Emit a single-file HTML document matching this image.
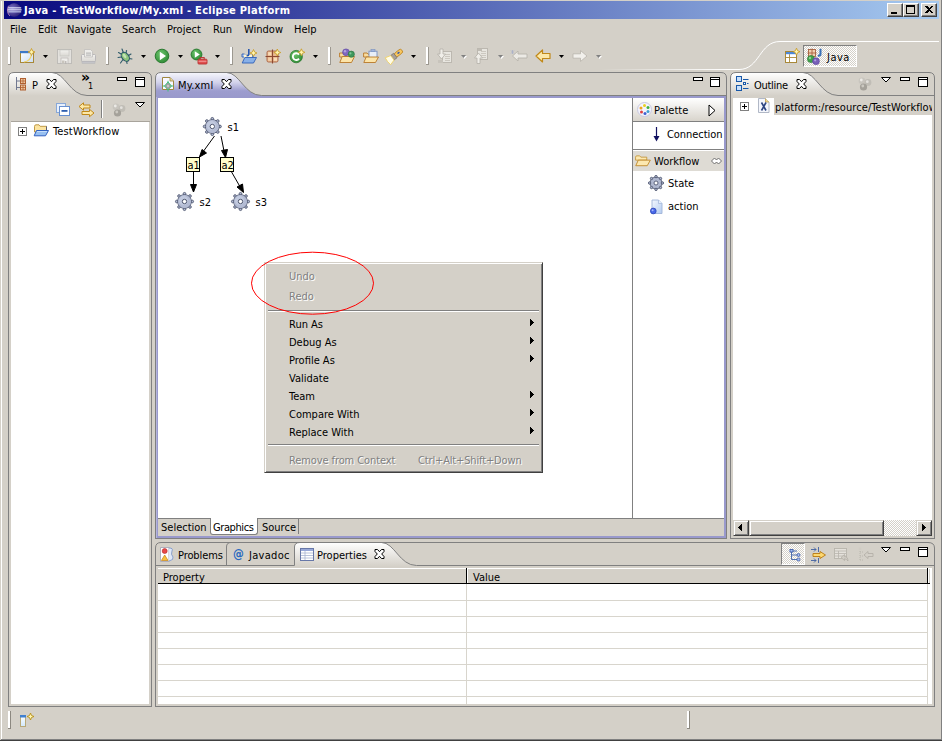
<!DOCTYPE html>
<html>
<head>
<meta charset="utf-8">
<title>Java - TestWorkflow/My.xml - Eclipse Platform</title>
<style>
html,body{margin:0;padding:0;}
body{width:942px;height:741px;overflow:hidden;background:#D4D0C8;position:relative;
 font-family:"DejaVu Sans Condensed","Liberation Sans",sans-serif;font-size:11px;color:#000;line-height:13px;}
.a{position:absolute;}
.t{position:absolute;white-space:nowrap;line-height:13px;height:13px;}
svg{position:absolute;overflow:visible;}
/* window frame */
#frame-l1{left:0;top:0;width:1px;height:741px;background:#D4D0C8;}
#frame-l2{left:1px;top:1px;width:1px;height:739px;background:#fff;}
#frame-r1{left:941px;top:0;width:1px;height:741px;background:#808080;}
#frame-r2{left:940px;top:1px;width:1px;height:739px;background:#D4D0C8;}
#frame-b1{left:0;top:740px;width:942px;height:1px;background:#404040;}
#frame-b2{left:1px;top:739px;width:940px;height:1px;background:#808080;}
#title{left:4px;top:1px;width:935px;height:18px;background:linear-gradient(to right,#08087E 0%,#A6CAF0 100%);}
#title .t{left:20px;top:3px;color:#fff;font-weight:bold;letter-spacing:0.27px;}
.wb{position:absolute;top:3px;width:16px;height:14px;background:#D4D0C8;box-sizing:border-box;
 border:1px solid;border-color:#fff #404040 #404040 #fff;box-shadow:inset -1px -1px 0 #808080;}
.menu .t{top:23px;}
.hdl{position:absolute;top:47px;width:3px;height:18px;box-sizing:border-box;background:#fff;border-right:1px solid #9C9890;border-bottom:1px solid #9C9890;}
.dd{position:absolute;top:55px;width:0;height:0;border-left:3px solid transparent;border-right:3px solid transparent;border-top:3px solid #000;}
.dd.g{border-top-color:#808080;}
.panel{position:absolute;box-sizing:border-box;border:1px solid #808080;border-radius:6px 6px 0 0;background:#D4D0C8;}
.white{position:absolute;background:#fff;}
.sbtn{background:#D4D0C8;box-sizing:border-box;border:1px solid;border-color:#D4D0C8 #404040 #404040 #D4D0C8;box-shadow:inset 1px 1px 0 #fff, inset -1px -1px 0 #808080;}
.hl{position:absolute;height:1px;}
.vl{position:absolute;width:1px;}
.plus{position:absolute;width:9px;height:9px;box-sizing:border-box;border:1px solid #808080;background:#fff;}
.plus:before{content:"";position:absolute;left:1px;top:3px;width:5px;height:1px;background:#000;}
.plus:after{content:"";position:absolute;left:3px;top:1px;width:1px;height:5px;background:#000;}
.mi{position:absolute;left:24px;white-space:nowrap;line-height:13px;}
.mi.dis{color:#808080;text-shadow:1px 1px 0 #fff;}
.sub{position:absolute;left:266px;width:0;height:0;border-top:3.5px solid transparent;border-bottom:3.5px solid transparent;border-left:4px solid #000;}
</style>
</head>
<body>
<!-- window frame -->
<div class="a" id="frame-l2"></div><div class="a" id="frame-r1"></div><div class="a" id="frame-r2"></div>
<div class="a" id="frame-b1"></div><div class="a" id="frame-b2"></div>
<div class="a" id="frame-t" style="left:1px;top:0;width:939px;height:1px;background:#D4D0C8"></div>

<!-- title bar -->
<div class="a" id="title">
  <div class="t">Java - TestWorkflow/My.xml - Eclipse Platform</div>
</div>
<div class="wb" style="left:887px"><div class="a" style="left:3px;top:8px;width:6px;height:2px;background:#000"></div></div>
<div class="wb" style="left:903px"><div class="a" style="left:2px;top:1px;width:9px;height:9px;box-sizing:border-box;border:1px solid #000;border-top-width:2px"></div></div>
<div class="wb" style="left:921px"><svg style="left:3px;top:2px" width="8" height="7" viewBox="0 0 8 7" shape-rendering="crispEdges"><path d="M0 0 H2 L4 2 L6 0 H8 L5 3.500 L8 7 H6 L4 5 L2 7 H0 L3 3.500 Z" fill="#000"/></svg></div>
<!-- eclipse icon -->
<svg style="left:7px;top:3px" width="15" height="14" viewBox="0 0 15 14">
 <defs><radialGradient id="gEcl" cx="0.35" cy="0.4" r="0.75"><stop offset="0" stop-color="#8078C8"/><stop offset="0.7" stop-color="#3C3088"/><stop offset="1" stop-color="#2C2468"/></radialGradient></defs>
 <ellipse cx="7.200" cy="7" rx="7" ry="6.800" fill="url(#gEcl)"/>
 <path d="M1.500 2.800 Q0.3 5 0.5 8.500 Q1 11.500 3 13" fill="none" stroke="#E0A0C0" stroke-width="0.9" opacity="0.8"/>
 <rect x="1.200" y="4.300" width="13" height="1.100" fill="#E8ECFC"/>
 <rect x="0.800" y="6.300" width="13.800" height="1.100" fill="#E8ECFC"/>
 <rect x="1.200" y="8.300" width="13" height="1.100" fill="#C8D0F0"/>
</svg>
<!-- menu bar -->
<div class="menu">
  <div class="t" style="left:10px">File</div>
  <div class="t" style="left:38px">Edit</div>
  <div class="t" style="left:67px">Navigate</div>
  <div class="t" style="left:122px">Search</div>
  <div class="t" style="left:167px">Project</div>
  <div class="t" style="left:213px">Run</div>
  <div class="t" style="left:244px">Window</div>
  <div class="t" style="left:294px">Help</div>
</div>

<!-- TOOLBAR-START -->
<!-- toolbar separator lines -->
<div class="hl" style="left:2px;top:41px;width:0px;background:#fff"></div>
<div class="hdl" style="left:8px"></div>
<div class="hdl" style="left:106px"></div>
<div class="hdl" style="left:230px"></div>
<div class="hdl" style="left:328px"></div>
<div class="hdl" style="left:426px"></div>
<!-- dropdown arrows -->
<svg style="left:43px;top:55px" width="5" height="3"><polygon points="0,0 5,0 2.5,3" fill="#000"/></svg>
<svg style="left:141px;top:55px" width="5" height="3"><polygon points="0,0 5,0 2.5,3" fill="#000"/></svg>
<svg style="left:178px;top:55px" width="5" height="3"><polygon points="0,0 5,0 2.5,3" fill="#000"/></svg>
<svg style="left:215px;top:55px" width="5" height="3"><polygon points="0,0 5,0 2.5,3" fill="#000"/></svg>
<svg style="left:313px;top:55px" width="5" height="3"><polygon points="0,0 5,0 2.5,3" fill="#000"/></svg>
<svg style="left:411px;top:55px" width="5" height="3"><polygon points="0,0 5,0 2.5,3" fill="#000"/></svg>
<svg style="left:461px;top:55px" width="6" height="4"><polygon points="1,1 6,1 3.5,4" fill="#fff"/><polygon points="0,0 5,0 2.5,3" fill="#808080"/></svg>
<svg style="left:498px;top:55px" width="6" height="4"><polygon points="1,1 6,1 3.5,4" fill="#fff"/><polygon points="0,0 5,0 2.5,3" fill="#808080"/></svg>
<svg style="left:559px;top:55px" width="5" height="3"><polygon points="0,0 5,0 2.5,3" fill="#000"/></svg>
<svg style="left:596px;top:55px" width="6" height="4"><polygon points="1,1 6,1 3.5,4" fill="#fff"/><polygon points="0,0 5,0 2.5,3" fill="#808080"/></svg>

<!-- new wizard -->
<svg style="left:20px;top:48px" width="16" height="16" viewBox="0 0 16 16">
 <defs><linearGradient id="gNew" x1="0" y1="0" x2="1" y2="1"><stop offset="0" stop-color="#fff"/><stop offset="1" stop-color="#C8DCF4"/></linearGradient></defs>
 <rect x="0.5" y="3.5" width="13" height="11" fill="url(#gNew)" stroke="#A88838"/>
 <rect x="0" y="3" width="11" height="2.2" fill="#3C78C8"/>
 <path d="M4 14 Q11 13 11.5 6" fill="none" stroke="#F0D060" stroke-width="1.2"/>
 <path d="M11.5 0.5 L12.6 3 L15 4 L12.6 5 L11.5 7.5 L10.4 5 L8 4 L10.4 3 Z" fill="#FFF6B0" stroke="#C89820" stroke-width="0.8"/>
</svg>
<!-- save (disabled) -->
<svg style="left:57px;top:49px" width="15" height="15" viewBox="0 0 15 15">
 <defs><linearGradient id="gDis" x1="0" y1="0" x2="0" y2="1"><stop offset="0" stop-color="#F2F1EE"/><stop offset="1" stop-color="#DAD8D3"/></linearGradient></defs>
 <rect x="0.5" y="0.5" width="14" height="14" fill="#E3E1DD" stroke="#BEBCB8"/>
 <rect x="3" y="1" width="9" height="6" fill="url(#gDis)" stroke="#C4C2BE" stroke-width="0.6"/>
 <rect x="4" y="9" width="7" height="5.500" fill="#F0EFEC" stroke="#B8B6B2" stroke-width="0.7"/>
 <rect x="5" y="11.500" width="2.500" height="3" fill="#C8C4BC"/><rect x="8.300" y="12" width="1" height="2.500" fill="#A8A4A0"/>
</svg>
<!-- print (disabled) -->
<svg style="left:81px;top:49px" width="15" height="15" viewBox="0 0 15 15">
 <rect x="0.5" y="5.500" width="14" height="7" rx="1" fill="url(#gDis)" stroke="#B8B6B8"/>
 <path d="M3.500 0.5 H9.500 L11.500 2.500 V8 H3.500 Z" fill="#EEEDEA" stroke="#C0BEBC" stroke-width="0.8"/>
 <rect x="1" y="12.500" width="13" height="1.800" fill="#C4C4C8" stroke="#B4B4B8" stroke-width="0.5"/>
 <rect x="5" y="3.600" width="5" height="1" fill="#B0B0B0"/><rect x="5" y="5.600" width="5" height="1" fill="#B0B0B0"/>
</svg>
<!-- debug bug -->
<svg style="left:117px;top:48px" width="17" height="17" viewBox="0 0 17 17">
 <g stroke="#2C5868" stroke-width="1.1" fill="none" stroke-linecap="round">
  <path d="M5 1 L6.5 5"/><path d="M1.5 4.5 L5 6.5"/><path d="M1 9.5 L4.5 9"/><path d="M3.5 15 L6 11.5"/>
  <path d="M9.5 2.5 L9 5.5"/><path d="M14 6 L11.5 7.5"/><path d="M15 11 L12 10.5"/><path d="M10 15.5 L9.5 12.5"/>
 </g>
 <ellipse cx="8.3" cy="8.8" rx="3.4" ry="5" transform="rotate(-38 8.3 8.8)" fill="#8CC47C" stroke="#2C5868" stroke-width="1.1"/>
 <ellipse cx="7.6" cy="8" rx="1.3" ry="2.4" transform="rotate(-38 7.6 8)" fill="#C4E4B4"/>
</svg>
<!-- run -->
<svg style="left:154px;top:48px" width="16" height="16" viewBox="0 0 16 16">
 <defs><radialGradient id="gRun" cx="0.4" cy="0.35" r="0.7"><stop offset="0" stop-color="#6CC46C"/><stop offset="1" stop-color="#2E8A34"/></radialGradient></defs>
 <circle cx="8" cy="8" r="6.8" fill="url(#gRun)" stroke="#2A7A30" stroke-width="1"/>
 <path d="M5.8 3.8 L12 8 L5.8 12.2 Z" fill="#fff"/>
</svg>
<!-- run external tools -->
<svg style="left:190px;top:48px" width="18" height="17" viewBox="0 0 18 17">
 <circle cx="6.5" cy="6.5" r="5.4" fill="url(#gRun)" stroke="#2A7A30" stroke-width="1"/>
 <path d="M4.8 3.3 L9.8 6.5 L4.8 9.7 Z" fill="#fff"/>
 <rect x="10.2" y="9.6" width="4" height="2.4" fill="none" stroke="#B83030" stroke-width="1"/>
 <rect x="8" y="11.2" width="9" height="4.8" rx="0.8" fill="#E05050" stroke="#B83030" stroke-width="0.9"/>
 <rect x="8.5" y="12.8" width="8" height="0.9" fill="#F4A0A0"/>
</svg>
<!-- new java project -->
<svg style="left:241px;top:48px" width="17" height="16" viewBox="0 0 17 16">
 <path d="M1 6 H3.5 L4.5 7 H12 V9 H1 Z" fill="#B8D0F0" stroke="#3060B8" stroke-width="0.9"/>
 <path d="M3 6.5 H11 V11 H3 Z" fill="#FFF4D0"/>
 <path d="M1.2 15 L3.8 9.5 H15.5 L12.5 15 Z" fill="#88B0E8" stroke="#3060B8" stroke-width="0.9"/>
 <path d="M7.8 1 V6.2 Q7.8 7.6 6.2 7.6 H5.6" fill="none" stroke="#2858B0" stroke-width="1.6"/>
 <path d="M12.5 1.5 L13.6 4 L16 5 L13.6 6 L12.5 8.5 L11.4 6 L9 5 L11.4 4 Z" fill="#FFF6B0" stroke="#C89820" stroke-width="0.8"/>
</svg>
<!-- new package -->
<svg style="left:265px;top:48px" width="17" height="16" viewBox="0 0 17 16">
 <rect x="2" y="3" width="11" height="11" rx="1.5" fill="#E8B890" stroke="#A86040" stroke-width="0.9"/>
 <path d="M7.5 1.5 V15.5 M0.5 8.5 H14.5" stroke="#8C4830" stroke-width="1.1"/>
 <rect x="3.2" y="4.2" width="3" height="3" fill="#F8DCB8"/><rect x="9" y="9.8" width="3" height="3" fill="#F8DCB8"/><rect x="3.2" y="9.8" width="3" height="3" fill="#F4D0A8"/>
 <path d="M12.3 1 L13.4 3.5 L15.8 4.5 L13.4 5.5 L12.3 8 L11.2 5.5 L8.8 4.5 L11.2 3.5 Z" fill="#FFF6B0" stroke="#C89820" stroke-width="0.8"/>
</svg>
<!-- new class -->
<svg style="left:289px;top:48px" width="17" height="16" viewBox="0 0 17 16">
 <circle cx="7.2" cy="8.6" r="6.2" fill="url(#gRun)" stroke="#2A7A30" stroke-width="0.8"/>
 <path d="M10 6.6 A3.4 3.4 0 1 0 10 10.6" fill="none" stroke="#fff" stroke-width="1.9"/>
 <path d="M12.4 0.8 L13.5 3.3 L15.9 4.3 L13.5 5.3 L12.4 7.8 L11.3 5.3 L8.9 4.3 L11.3 3.3 Z" fill="#FFF6B0" stroke="#C89820" stroke-width="0.8"/>
</svg>
<!-- open type -->
<svg style="left:339px;top:48px" width="17" height="16" viewBox="0 0 17 16">
 <path d="M0.6 5 H4 L5 6.2 H12.5 V9 H0.6 Z" fill="#F8DCA0" stroke="#B87828" stroke-width="0.9"/>
 <path d="M0.8 14.5 L3.2 8.5 H15.5 L12.5 14.5 Z" fill="#FCE4A8" stroke="#B87828" stroke-width="0.9"/>
 <circle cx="7" cy="4.3" r="3.4" fill="#8068C0" stroke="#5840A0" stroke-width="0.6"/>
 <circle cx="6" cy="3.3" r="1.2" fill="#B0A0E0"/>
 <circle cx="12.3" cy="6.2" r="3.1" fill="#40985C" stroke="#287040" stroke-width="0.6"/>
 <circle cx="11.4" cy="5.3" r="1.1" fill="#80C898"/>
</svg>
<!-- open task -->
<svg style="left:363px;top:48px" width="17" height="16" viewBox="0 0 17 16">
 <path d="M0.6 5 H4 L5 6.2 H12.5 V9 H0.6 Z" fill="#F8DCA0" stroke="#B87828" stroke-width="0.9"/>
 <rect x="6" y="3.2" width="8" height="6.5" fill="#E8EEF8" stroke="#7890C0" stroke-width="0.9"/>
 <rect x="8" y="1.6" width="4" height="2" fill="#A0B4DC" stroke="#7890C0" stroke-width="0.6"/>
 <path d="M0.8 14.5 L3.2 9 H15.5 L12.5 14.5 Z" fill="#FCE4A8" stroke="#B87828" stroke-width="0.9"/>
</svg>
<!-- search flashlight -->
<svg style="left:387px;top:48px" width="17" height="16" viewBox="0 0 17 16">
 <g transform="rotate(-38 8 8)">
  <rect x="8.200" y="5.600" width="8.800" height="4.400" rx="2" fill="#F8C860" stroke="#C08828" stroke-width="0.9"/>
  <rect x="11.500" y="6.900" width="2.400" height="1.500" fill="#3858A8"/>
  <path d="M4.800 5 H8.600 V10.600 H4.800 Z" fill="#A8A098" stroke="#787068" stroke-width="0.7"/>
  <path d="M-0.800 3.400 L4.800 5 V10.600 L-0.800 12.200 Q-1.800 7.800 -0.800 3.400 Z" fill="#FFFCE8" stroke="#F0D060" stroke-width="0.8"/>
 </g>
</svg>
<!-- disabled: next annotation -->
<svg style="left:437px;top:48px" width="16" height="16" viewBox="0 0 16 16">
 <rect x="5.5" y="3.5" width="9" height="11" fill="#E8E6E0" stroke="#BCB8B0"/>
 <path d="M8 6.5 H13 M8 8.5 H13 M8 10.5 H13 M8 12.5 H13" stroke="#C4C0B8" stroke-width="0.8"/>
 <path d="M3 1 H6 V6 H8.5 L4.5 11 L0.5 6 H3 Z" fill="#F0EEE9" stroke="#B4B0A8" stroke-width="0.8"/>
 <rect x="1" y="12" width="5" height="3" fill="#C8C4BC"/>
</svg>
<!-- disabled: prev annotation -->
<svg style="left:474px;top:48px" width="16" height="16" viewBox="0 0 16 16">
 <rect x="3.5" y="0.5" width="10" height="11" fill="#E8E6E0" stroke="#BCB8B0"/>
 <path d="M7 3.5 H12 M7 5.5 H12 M7 7.5 H12 M7 9.5 H12" stroke="#C4C0B8" stroke-width="0.8"/>
 <rect x="4" y="1" width="4" height="2" fill="#C0BCB4"/>
 <path d="M3 15.5 H6 V10 H8.5 L4.5 5 L0.5 10 H3 Z" fill="#F0EEE9" stroke="#B4B0A8" stroke-width="0.8"/>
</svg>
<!-- disabled: last edit location -->
<svg style="left:510px;top:49px" width="18" height="14" viewBox="0 0 18 14">
 <path d="M2.5 7 L8 2 V5 H17 V9 H8 V12 Z" fill="#ECEAE5" stroke="#B8B4AC" stroke-width="0.9"/>
 <path d="M1 1.5 L4 4.5 M4 1.5 L1 4.5 M2.5 1 V5" stroke="#A8B0C8" stroke-width="0.8"/>
</svg>
<!-- back -->
<svg style="left:535px;top:49px" width="16" height="14" viewBox="0 0 16 14">
 <path d="M1 7 L7.5 1 V4.5 H15 V9.5 H7.5 V13 Z" fill="#FCE8A8" stroke="#C08818" stroke-width="1.2" stroke-linejoin="round"/>
</svg>
<!-- forward disabled -->
<svg style="left:572px;top:49px" width="16" height="14" viewBox="0 0 16 14">
 <path d="M15 7 L8.5 1.5 V4.8 H1 V9.2 H8.5 V12.5 Z" fill="#F2F0EC" stroke="#BCB8B0" stroke-width="0.9" stroke-linejoin="round"/>
</svg>
<!-- TOOLBAR-END -->

<!-- PANELS-START -->
<!-- perspective switcher curve + toolbar bottom highlight -->
<svg style="left:0;top:0" width="942" height="100">
 <defs><linearGradient id="gFade" gradientUnits="userSpaceOnUse" x1="600" y1="0" x2="730" y2="0"><stop offset="0" stop-color="#fff" stop-opacity="0"/><stop offset="1" stop-color="#fff" stop-opacity="1"/></linearGradient></defs>
 <path d="M600 69.5 H739 C760 69.5 759 41.5 780 41.5 H939" fill="none" stroke="url(#gFade)" stroke-width="1"/>
</svg>
<!-- open perspective -->
<svg style="left:785px;top:48px" width="16" height="16" viewBox="0 0 16 16">
 <rect x="0.5" y="3.5" width="11" height="11" fill="#fff" stroke="#A88838"/>
 <rect x="1" y="4" width="10" height="2.2" fill="#4C88D8"/>
 <path d="M1 9.5 H11 M4.5 6.2 V14" stroke="#A88838" stroke-width="0.9"/>
 <path d="M11.5 0.2 L12.6 2.7 L15 3.7 L12.6 4.7 L11.5 7.2 L10.4 4.7 L8 3.7 L10.4 2.7 Z" fill="#FFF6B0" stroke="#C89820" stroke-width="0.8"/>
</svg>
<!-- Java perspective button (pressed) -->
<div class="a" style="left:803px;top:45px;width:54px;height:22px;box-sizing:border-box;background:repeating-conic-gradient(#fff 0% 25%,#D4D0C8 0% 50%) 0 0/2px 2px;border:1px solid;border-color:#808080 #fff #fff #808080;"></div>
<svg style="left:807px;top:48px" width="17" height="17" viewBox="0 0 17 17">
 <rect x="1.5" y="1.5" width="7" height="7" fill="#F0D0B0" stroke="#A86040" stroke-width="0.9"/>
 <path d="M5 0.5 V9.5 M0.5 5 H9.5" stroke="#A86040" stroke-width="0.9"/>
 <path d="M13.5 0.8 V6 Q13.5 7.8 11.6 7.8 H10.800" fill="none" stroke="#3870B8" stroke-width="2"/>
 <circle cx="4" cy="11" r="3.6" fill="#40A048" stroke="#287838" stroke-width="0.6"/><circle cx="3" cy="10" r="1.2" fill="#90D098"/>
 <circle cx="9" cy="13.2" r="3.4" fill="#7860B8" stroke="#5840A0" stroke-width="0.6"/><circle cx="8.2" cy="12.3" r="1.1" fill="#B0A0E0"/>
</svg>
<div class="t" style="left:827px;top:51px;letter-spacing:0.5px">Java</div>

<!-- ===== LEFT PANEL (Package Explorer) ===== -->
<svg style="left:8px;top:72px" width="144" height="30">
 <defs><linearGradient id="gTabW" x1="0" y1="0" x2="0" y2="1"><stop offset="0" stop-color="#fff"/><stop offset="1" stop-color="#D4D0C8"/></linearGradient></defs>
 <path d="M0.5 24 V6 Q0.5 0.5 6 0.5 H44 C57 0.5 62 23.5 79 23.5 H0.5 Z" fill="url(#gTabW)"/>
 <path d="M0.5 30 V6 Q0.5 0.5 6 0.5 H138 Q143.500 0.5 143.500 6 V30" fill="none" stroke="#808080"/>
 <path d="M44 0.5 C57 0.5 62 23.5 79 23.5 H143.500" fill="none" stroke="#808080"/>
</svg>
<div class="a" style="left:8px;top:100px;width:1px;height:607px;background:#808080"></div>
<div class="a" style="left:151px;top:100px;width:1px;height:607px;background:#808080"></div>
<div class="a" style="left:8px;top:706px;width:144px;height:1px;background:#808080"></div>
<div class="a" style="left:11px;top:121px;width:139px;height:1px;background:#A8A49C"></div>
<div class="white" style="left:11px;top:122px;width:138px;height:582px"></div>
<!-- tab icon: package explorer -->
<svg style="left:16px;top:77px" width="10" height="14" viewBox="0 0 10 14">
 <path d="M0.5 0 V13 M0.5 4 H4 M0.5 10.500 H4" stroke="#707890" stroke-width="1" fill="none"/>
 <rect x="4.500" y="1.5" width="5" height="5" fill="#F0C8A0" stroke="#B06030"/><path d="M7 1.5 V6.5 M4.500 4 H9.500" stroke="#B06030" stroke-width="0.8"/>
 <rect x="4.500" y="8" width="5" height="5" fill="#F0C8A0" stroke="#B06030"/><path d="M7 8 V13 M4.500 10.500 H9.500" stroke="#B06030" stroke-width="0.8"/>
</svg>
<div class="t" style="left:32px;top:79px">P</div>
<svg class="cx" style="left:46px;top:79px" width="11" height="10" viewBox="0 0 11 10"><path d="M1 0.5 H3.500 L5.500 2.700 L7.500 0.5 H10 V2.500 L7.700 5 L10 7.500 V9.500 H7.500 L5.500 7.300 L3.500 9.500 H1 V7.500 L3.300 5 L1 2.500 Z" fill="#fff" stroke="#000" stroke-width="1"/></svg>
<div class="t" style="left:81px;top:71px;font-size:14px;font-weight:bold;font-family:'DejaVu Sans','Liberation Sans',sans-serif">»</div>
<div class="t" style="left:88px;top:80px;font-size:9px">1</div>
<!-- min / max -->
<svg style="left:117px;top:77px" width="11" height="4"><rect x="0.5" y="0.5" width="9" height="3" fill="#fff" stroke="#000"/></svg>
<svg style="left:135px;top:77px" width="11" height="10"><rect x="0.5" y="0.5" width="9" height="9" fill="#fff" stroke="#000"/><rect x="0" y="2" width="10" height="1" fill="#000"/></svg>
<!-- view toolbar -->
<svg style="left:56px;top:103px" width="14" height="13" viewBox="0 0 14 13">
 <rect x="0.5" y="0.5" width="9" height="9" fill="#E8F0FC" stroke="#88A8D8"/>
 <rect x="3.500" y="3.500" width="10" height="9" fill="#fff" stroke="#6890D0"/>
 <rect x="5.500" y="7" width="6" height="1.800" fill="#3060B0"/>
</svg>
<svg style="left:78px;top:102px" width="17" height="16" viewBox="0 0 17 16">
 <path d="M1 4.500 L5.500 0.800 V3 H12 V6 H5.500 V8.200 Z" fill="#FCE8A8" stroke="#C08818" stroke-width="1" stroke-linejoin="round"/>
 <path d="M16 11 L11.500 7.300 V9.500 H4 V12.500 H11.500 V14.700 Z" fill="#FCE8A8" stroke="#C08818" stroke-width="1" stroke-linejoin="round"/>
</svg>
<div class="a" style="left:101px;top:100px;width:1px;height:18px;background:#808080"></div>
<div class="a" style="left:102px;top:100px;width:1px;height:18px;background:#fff"></div>
<svg style="left:112px;top:103px" width="14" height="14" viewBox="0 0 14 14">
 <circle cx="4" cy="3.800" r="3.400" fill="#C8C5BE"/><circle cx="10" cy="5.500" r="3.400" fill="#C0BDB6"/><circle cx="5.500" cy="10" r="3.600" fill="#A4A19A"/>
 <circle cx="3.300" cy="3" r="1.400" fill="#ECEAE6"/><circle cx="9.300" cy="4.700" r="1.400" fill="#E4E2DE"/><circle cx="4.800" cy="9" r="1.400" fill="#CCC9C2"/>
</svg>
<svg style="left:135px;top:102px" width="11" height="6"><path d="M0.5 0.5 H9.500 L5 5 Z" fill="#fff" stroke="#000" stroke-width="1"/></svg>
<!-- tree -->
<div class="plus" style="left:18px;top:127px"></div>
<svg style="left:33px;top:124px" width="16" height="13" viewBox="0 0 16 13">
 <path d="M1.500 2.500 Q1.500 0.800 3 0.800 H6 L7.200 2.300 H13.500 V8 H1.500 Z" fill="#FCE4A0" stroke="#B89038" stroke-width="0.9"/>
 <path d="M13.500 2.500 V7" stroke="#505878" stroke-width="0.9"/>
 <path d="M1.200 11.800 L3.500 6.500 H15.500 L12.500 11.800 Z" fill="#98C0F0" stroke="#3060C0" stroke-width="1"/>
 <path d="M4 7.500 H14" stroke="#D0E4FC" stroke-width="0.8"/>
</svg>
<div class="t" style="left:53px;top:125px;letter-spacing:0.15px">TestWorkflow</div>

<!-- ===== EDITOR ===== -->
<svg style="left:155px;top:72px" width="572" height="30">
 <defs><linearGradient id="gTabP" x1="0" y1="0" x2="0" y2="1"><stop offset="0" stop-color="#F6F6FC"/><stop offset="0.38" stop-color="#D4D4EC"/><stop offset="0.72" stop-color="#9C9CCE"/><stop offset="1" stop-color="#9999CC"/></linearGradient></defs>
 <path d="M0.5 26 V6 Q0.5 0.5 6 0.5 H71.500 C84.500 0.5 89.500 23.5 106.500 23.5 H571 V26 Z" fill="url(#gTabP)"/>
 <rect x="1" y="23.500" width="570" height="2.500" fill="#9999CC"/>
 <path d="M0.5 30 V6 Q0.5 0.5 6 0.5 H566 Q571.500 0.5 571.500 6 V30" fill="none" stroke="#808080"/>
 <path d="M71.500 0.5 C84.500 0.5 89.500 23.5 106.500 23.5 H571" fill="none" stroke="#808080"/>
</svg>
<div class="a" style="left:155px;top:100px;width:1px;height:439px;background:#808080"></div>
<div class="a" style="left:726px;top:100px;width:1px;height:439px;background:#808080"></div>
<div class="a" style="left:155px;top:538px;width:572px;height:1px;background:#808080"></div>
<div class="a" style="left:156px;top:96px;width:570px;height:442px;background:#9999CC"></div>
<div class="a" style="left:156px;top:97px;width:1px;height:441px;background:#B4B4DC"></div>
<div class="white" style="left:158px;top:98px;width:474px;height:420px"></div>
<!-- editor tab content -->
<svg style="left:162px;top:77px" width="12" height="15" viewBox="0 0 12 15">
 <path d="M0.5 0.5 H8 L11.500 4 V12.500 H0.5 Z" fill="#F8F8FF" stroke="#A08840" stroke-width="1"/>
 <path d="M8 0.5 V4 H11.500" fill="#E8D8A0" stroke="#A08840" stroke-width="0.8"/>
 <path d="M6 5 L9.500 9 L6 13 L2.500 9 Z" fill="#A0A0A0" stroke="#38C078" stroke-width="0.9"/>
 <circle cx="6" cy="9" r="1.200" fill="#C8C8C8"/>
 <path d="M6 3.800 V5.500 M6 12.500 V14.500 M0.800 9 H2.800 M9.200 9 H11.200" stroke="#38C078" stroke-width="1"/>
</svg>
<div class="t" style="left:178px;top:79px;letter-spacing:0.2px">My.xml</div>
<svg style="left:221px;top:79px" width="11" height="10" viewBox="0 0 11 10"><path d="M1 0.5 H3.500 L5.500 2.700 L7.500 0.5 H10 V2.500 L7.700 5 L10 7.500 V9.500 H7.500 L5.500 7.300 L3.500 9.500 H1 V7.500 L3.300 5 L1 2.500 Z" fill="#fff" stroke="#000" stroke-width="1"/></svg>
<svg style="left:693px;top:77px" width="11" height="4"><rect x="0.5" y="0.5" width="9" height="3" fill="#fff" stroke="#000"/></svg>
<svg style="left:710px;top:77px" width="11" height="10"><rect x="0.5" y="0.5" width="9" height="9" fill="#fff" stroke="#000"/><rect x="0" y="2" width="10" height="1" fill="#000"/></svg>

<!-- editor bottom tabs -->
<div class="a" style="left:158px;top:518px;width:566px;height:18px;background:#D4D0C8"></div>
<div class="a" style="left:158px;top:518px;width:566px;height:1px;background:#808080"></div>
<div class="a" style="left:210px;top:518px;width:48px;height:17px;background:#fff;border-radius:0 0 3px 3px;border:1px solid #808080;border-top:none;box-sizing:border-box"></div>
<div class="a" style="left:298px;top:519px;width:1px;height:15px;background:#808080"></div>
<div class="t" style="left:161px;top:521px">Selection</div>
<div class="t" style="left:213px;top:521px;letter-spacing:-0.4px">Graphics</div>
<div class="t" style="left:262px;top:521px">Source</div>

<!-- palette -->
<div class="a" style="left:632px;top:98px;width:1px;height:420px;background:#808080"></div>
<div class="a" style="left:633px;top:98px;width:91px;height:420px;background:#fff"></div>
<div class="a" style="left:633px;top:98px;width:91px;height:23px;background:linear-gradient(to bottom,#fff,#D8D4CC)"></div>
<div class="a" style="left:633px;top:121px;width:91px;height:1px;background:#808080"></div>
<svg style="left:637px;top:102px" width="15" height="15" viewBox="0 0 15 15">
 <circle cx="7.500" cy="7.500" r="7" fill="#F4F4FC" stroke="#C8C8E0" stroke-width="1"/>
 <circle cx="4" cy="6" r="1.500" fill="#F0A020"/><circle cx="7.500" cy="3.500" r="1.500" fill="#E8D020"/><circle cx="11" cy="5.500" r="1.500" fill="#40B040"/>
 <circle cx="4.500" cy="10" r="1.500" fill="#E04040"/><circle cx="8" cy="11.500" r="1.500" fill="#4060D0"/><circle cx="11" cy="9.500" r="1.500" fill="#40A0D0"/>
</svg>
<div class="t" style="left:654px;top:104px">Palette</div>
<svg style="left:708px;top:104px" width="8" height="13"><path d="M1 1 V12 L7 6.500 Z" fill="#fff" stroke="#000" stroke-width="1"/></svg>
<svg style="left:652px;top:127px" width="9" height="15"><path d="M4.500 0 V10" stroke="#101060" stroke-width="1.200"/><path d="M1.500 9 H7.500 L4.500 14.500 Z" fill="#101060"/></svg>
<div class="t" style="left:667px;top:128px;letter-spacing:-0.05px">Connection</div>
<div class="a" style="left:633px;top:149px;width:91px;height:1px;background:#808080"></div>
<div class="a" style="left:633px;top:150px;width:91px;height:1px;background:#fff"></div>
<div class="a" style="left:633px;top:151px;width:91px;height:20px;background:#DEDBD4"></div>
<svg style="left:635px;top:155px" width="16" height="12" viewBox="0 0 17 14" preserveAspectRatio="none">
 <path d="M0.6 2.500 Q0.6 1 2 1 H5 L6.200 2.500 H12.500 V6 H0.6 Z" fill="#FCE8B0" stroke="#C09030" stroke-width="0.9"/>
 <path d="M0.8 12.500 L3.500 6 H16.300 L13 12.500 Z" fill="#FCE8B0" stroke="#C08828" stroke-width="1"/>
</svg>
<div class="t" style="left:654px;top:155px">Workflow</div>
<svg style="left:711px;top:157px" width="11" height="8" viewBox="0 0 11 8"><path d="M0.5 4 L3.500 1 L5.500 3 L7.500 1 L10.500 4 L7.500 7 L5.500 5 L3.500 7 Z" fill="#fff" stroke="#606060" stroke-width="0.9"/></svg>
<svg style="left:648px;top:175px" width="16" height="16" viewBox="0 0 16 16">
 <g fill="#B0B8D0" stroke="#505870" stroke-width="0.9">
  <circle cx="8" cy="8" r="6"/>
  <circle cx="8" cy="1.600" r="1.200"/><circle cx="8" cy="14.400" r="1.200"/><circle cx="1.600" cy="8" r="1.200"/><circle cx="14.400" cy="8" r="1.200"/>
  <circle cx="3.500" cy="3.500" r="1.200"/><circle cx="12.500" cy="3.500" r="1.200"/><circle cx="3.500" cy="12.500" r="1.200"/><circle cx="12.500" cy="12.500" r="1.200"/>
 </g>
 <circle cx="8" cy="8" r="2" fill="#fff" stroke="#505870" stroke-width="0.9"/>
</svg>
<div class="t" style="left:668px;top:177px">State</div>
<svg style="left:649px;top:199px" width="14" height="16" viewBox="0 0 14 16">
 <defs><linearGradient id="gAct" x1="0" y1="0" x2="1" y2="1"><stop offset="0" stop-color="#F4F8FF"/><stop offset="1" stop-color="#B4CCF0"/></linearGradient></defs>
 <path d="M3 1 H9.500 L13 4.500 V14.500 H3 Z" fill="url(#gAct)" stroke="#A0B4D8" stroke-width="0.9"/>
 <path d="M9.500 1 V4.500 H13" fill="#E8F0FC" stroke="#A0B4D8" stroke-width="0.7"/>
 <circle cx="4.300" cy="12" r="2.900" fill="#4868E8" stroke="#2840B0" stroke-width="0.7"/><circle cx="3.600" cy="11.200" r="1" fill="#A8B8FC"/>
</svg>
<div class="t" style="left:668px;top:200px">action</div>

<!-- ===== OUTLINE ===== -->
<svg style="left:730px;top:72px" width="206" height="30">
 <path d="M0.5 24 V6 Q0.5 0.5 6 0.5 H73 C86 0.5 91 23.5 108 23.5 H0.5 Z" fill="url(#gTabW)"/>
 <path d="M0.5 30 V6 Q0.5 0.5 6 0.5 H199 Q204.500 0.5 204.500 6 V30" fill="none" stroke="#808080"/>
 <path d="M73 0.5 C86 0.5 91 23.5 108 23.5 H204.500" fill="none" stroke="#808080"/>
</svg>
<div class="a" style="left:730px;top:100px;width:1px;height:439px;background:#808080"></div>
<div class="a" style="left:934px;top:100px;width:1px;height:439px;background:#808080"></div>
<div class="a" style="left:730px;top:538px;width:205px;height:1px;background:#808080"></div>
<div class="white" style="left:733px;top:98px;width:199px;height:422px"></div>
<svg style="left:736px;top:76px" width="13" height="16" viewBox="0 0 13 16">
 <rect x="0.5" y="0.5" width="5" height="5" fill="#C8E0FC" stroke="#1858A8"/><rect x="0.5" y="9.500" width="5" height="5" fill="#C8E0FC" stroke="#1858A8"/>
 <path d="M7 3.500 H12.500 M7 12.500 H12.500" stroke="#1858A8" stroke-width="1"/>
 <rect x="7.500" y="6.500" width="2" height="2" fill="#fff" stroke="#1858A8"/><path d="M11 7.500 H12.500" stroke="#1858A8"/>
</svg>
<div class="t" style="left:754px;top:79px;letter-spacing:-0.3px">Outline</div>
<svg style="left:796px;top:79px" width="11" height="10" viewBox="0 0 11 10"><path d="M1 0.5 H3.500 L5.500 2.700 L7.500 0.5 H10 V2.500 L7.700 5 L10 7.500 V9.500 H7.500 L5.500 7.300 L3.500 9.500 H1 V7.500 L3.300 5 L1 2.500 Z" fill="#fff" stroke="#000" stroke-width="1"/></svg>
<svg style="left:858px;top:77px" width="14" height="14" viewBox="0 0 14 14">
 <circle cx="4" cy="3.800" r="3.400" fill="#C8C5BE"/><circle cx="10" cy="5.500" r="3.400" fill="#C0BDB6"/><circle cx="5.500" cy="10" r="3.600" fill="#A4A19A"/>
 <circle cx="3.300" cy="3" r="1.400" fill="#ECEAE6"/><circle cx="9.300" cy="4.700" r="1.400" fill="#E4E2DE"/><circle cx="4.800" cy="9" r="1.400" fill="#CCC9C2"/>
</svg>
<svg style="left:881px;top:77px" width="11" height="6"><path d="M0.5 0.5 H9.500 L5 5 Z" fill="#fff" stroke="#000" stroke-width="1"/></svg>
<svg style="left:900px;top:77px" width="11" height="4"><rect x="0.5" y="0.5" width="9" height="3" fill="#fff" stroke="#000"/></svg>
<svg style="left:918px;top:77px" width="11" height="10"><rect x="0.5" y="0.5" width="9" height="9" fill="#fff" stroke="#000"/><rect x="0" y="2" width="10" height="1" fill="#000"/></svg>
<div class="plus" style="left:740px;top:102px"></div>
<svg style="left:758px;top:98px" width="12" height="16" viewBox="0 0 12 16">
 <path d="M0.5 0.5 H7.500 L11 4 V14.500 H0.5 Z" fill="#F4F6FC" stroke="#A8B0C0" stroke-width="0.9"/>
 <path d="M7.500 0.5 V4 H11" fill="#F0D890" stroke="#C0A050" stroke-width="0.8"/>
 <path d="M3.500 4.500 L8 12.500 M8 4.500 L3.500 12.500" stroke="#2C4480" stroke-width="1.600"/>
</svg>
<div class="a" style="left:774px;top:98px;width:158px;height:17px;background:#D4D0C8"></div>
<div class="t" style="left:775px;top:101px;width:157px;overflow:hidden;letter-spacing:0.08px">platform:/resource/TestWorkflow</div>
<!-- h scrollbar -->
<div class="a" style="left:733px;top:520px;width:199px;height:16px;background:repeating-conic-gradient(#fff 0% 25%,#D4D0C8 0% 50%) 0 0/2px 2px"></div>
<div class="a sbtn" style="left:733px;top:520px;width:16px;height:16px"></div>
<div class="a sbtn" style="left:916px;top:520px;width:16px;height:16px"></div>
<div class="a sbtn" style="left:749px;top:520px;width:135px;height:16px"></div>
<svg style="left:738px;top:524px" width="4" height="7" shape-rendering="crispEdges"><path d="M4 0 V7 L0 3.500 Z" fill="#000"/></svg>
<svg style="left:922px;top:524px" width="4" height="7" shape-rendering="crispEdges"><path d="M0 0 V7 L4 3.500 Z" fill="#000"/></svg>

<!-- ===== PROPERTIES ===== -->
<svg style="left:155px;top:542px" width="780" height="30">
 <path d="M139.500 24.500 V5 Q139.500 0.5 145 0.5 H226.500 C239.500 0.5 244.500 23.500 261.500 23.500 V24.500 Z" fill="url(#gTabW)"/>
 <path d="M0.5 30 V6 Q0.5 0.5 6 0.5 H773 Q779.500 0.5 779.500 6 V30" fill="none" stroke="#808080"/>
 <path d="M0.5 23.500 H139.500 V5 Q139.500 0.5 145 0.5 M226.500 0.5 C239.500 0.5 244.500 23.500 261.500 23.500 H779.500" fill="none" stroke="#808080"/>
 <path d="M71.500 23 V5 Q71.500 0.5 76 0.5" fill="none" stroke="#808080"/>
</svg>
<div class="a" style="left:155px;top:570px;width:1px;height:137px;background:#808080"></div>
<div class="a" style="left:934px;top:570px;width:1px;height:137px;background:#808080"></div>
<div class="a" style="left:155px;top:706px;width:780px;height:1px;background:#808080"></div>
<div class="white" style="left:158px;top:568px;width:774px;height:136px"></div>
<!-- tabs content -->
<svg style="left:160px;top:547px" width="14" height="15" viewBox="0 0 14 15">
 <path d="M0.5 0.5 H9 V14.500 H0.5 Z" fill="#fff" stroke="#A8A8B8" stroke-width="0.9"/>
 <path d="M9 1 Q13.500 1 12 4 Q10.500 7.500 13 10 Q14 13 9 14" fill="#E0E8F8" stroke="#8098C8" stroke-width="0.9"/>
 <circle cx="4.700" cy="4" r="2.500" fill="#E84848" stroke="#B02828" stroke-width="0.6"/>
 <path d="M4.700 8 L8 13.500 H1.400 Z" fill="#F8C040" stroke="#C08010" stroke-width="0.7"/>
</svg>
<div class="t" style="left:178px;top:549px;letter-spacing:-0.1px">Problems</div>
<div class="t" style="left:233px;top:548px;color:#2868C0;font-size:12px;font-weight:bold;font-family:'DejaVu Sans Condensed',sans-serif">@</div>
<div class="t" style="left:249px;top:549px;letter-spacing:0.3px">Javadoc</div>
<svg style="left:300px;top:548px" width="14" height="13" viewBox="0 0 14 13">
 <rect x="0.5" y="0.5" width="13" height="12" fill="#fff" stroke="#6878A8" stroke-width="1"/>
 <rect x="1" y="1" width="12" height="2" fill="#98A8D8"/>
 <path d="M1 5 H13 M1 7.500 H13 M1 10 H13 M5 3 V12" stroke="#A8B4D0" stroke-width="0.8"/>
</svg>
<div class="t" style="left:317px;top:549px">Properties</div>
<svg style="left:374px;top:549px" width="11" height="10" viewBox="0 0 11 10"><path d="M1 0.5 H3.500 L5.500 2.700 L7.500 0.5 H10 V2.500 L7.700 5 L10 7.500 V9.500 H7.500 L5.500 7.300 L3.500 9.500 H1 V7.500 L3.300 5 L1 2.500 Z" fill="#fff" stroke="#000" stroke-width="1"/></svg>
<!-- properties toolbar -->
<div class="a" style="left:781px;top:543px;width:24px;height:22px;box-sizing:border-box;background:repeating-conic-gradient(#fff 0% 25%,#D4D0C8 0% 50%) 0 0/2px 2px;border:1px solid;border-color:#808080 #fff #fff #808080;"></div>
<svg style="left:789px;top:549px" width="13" height="13" viewBox="0 0 13 13">
 <path d="M2.500 1 V10.500 H8 M2.500 6 H8 M2.500 2 H8" stroke="#5070B0" stroke-width="1" fill="none"/>
 <circle cx="9.500" cy="6" r="1.500" fill="#A8C0F0" stroke="#3858A8" stroke-width="0.8"/><circle cx="9.500" cy="10.500" r="1.500" fill="#A8C0F0" stroke="#3858A8" stroke-width="0.8"/>
 <rect x="1" y="0.5" width="3" height="2.500" fill="#A8C0F0" stroke="#3858A8" stroke-width="0.8"/>
</svg>
<svg style="left:810px;top:547px" width="17" height="16" viewBox="0 0 17 16">
 <path d="M1 2.500 H6 M4 0.5 L6 2.500 L4 4.500 M8.500 0 V5" stroke="#4060A0" stroke-width="0.9" fill="none"/>
 <path d="M1 13.500 H6 M4 11.500 L6 13.500 L4 15.500 M8.500 11 V16" stroke="#4060A0" stroke-width="0.9" fill="none"/>
 <path d="M3 6.500 H10 V4.500 L15.500 8 L10 11.500 V9.500 H3 Z" fill="#FCD870" stroke="#B87810" stroke-width="0.9"/>
</svg>
<svg style="left:834px;top:548px" width="15" height="14" viewBox="0 0 15 14">
 <rect x="0.5" y="0.5" width="12" height="10" fill="#E4E1DB" stroke="#B8B4AC" stroke-width="0.9"/>
 <path d="M1 3 H12 M1 5.500 H12 M1 8 H12 M4.500 3 V10" stroke="#B8B4AC" stroke-width="0.8"/>
 <path d="M7 9.500 L10.500 6.500 V8.500 Q14 8.500 14 13 Q12.500 10.800 10.500 10.800 V12.500 Z" fill="#D0CCC4" stroke="#B0ACA4" stroke-width="0.7"/>
</svg>
<svg style="left:858px;top:547px" width="16" height="15" viewBox="0 0 16 15">
 <path d="M2 2 V13 M2 5 H5 M2 9 H5 M2 13 H5" stroke="#B8B4AC" stroke-width="0.9" stroke-dasharray="1 1" fill="none"/>
 <rect x="0.800" y="0.5" width="2.500" height="2.500" fill="#D0CCC4"/>
 <path d="M6 8 L10 4.500 V6.500 H15 V9.500 H10 V11.500 Z" fill="#D4D0C8" stroke="#B4B0A8" stroke-width="0.9"/>
</svg>
<svg style="left:881px;top:547px" width="11" height="6"><path d="M0.5 0.5 H9.500 L5 5 Z" fill="#fff" stroke="#000" stroke-width="1"/></svg>
<svg style="left:900px;top:547px" width="11" height="4"><rect x="0.5" y="0.5" width="9" height="3" fill="#fff" stroke="#000"/></svg>
<svg style="left:918px;top:547px" width="11" height="10"><rect x="0.5" y="0.5" width="9" height="9" fill="#fff" stroke="#000"/><rect x="0" y="2" width="10" height="1" fill="#000"/></svg>
<!-- table header -->
<div class="a" style="left:158px;top:568px;width:772px;height:16px;background:#D4D0C8;border-top:1px solid #fff;border-bottom:1px solid #000;box-sizing:border-box;"></div>
<div class="a" style="left:466px;top:568px;width:1px;height:15px;background:#000"></div>
<div class="a" style="left:467px;top:568px;width:1px;height:15px;background:#fff"></div>
<div class="a" style="left:927px;top:568px;width:1px;height:15px;background:#000"></div>
<div class="a" style="left:928px;top:568px;width:1px;height:15px;background:#fff"></div>
<div class="t" style="left:163px;top:571px">Property</div>
<div class="t" style="left:473px;top:571px">Value</div>
<!-- grid lines -->
<div class="a" style="left:158px;top:600px;width:770px;height:1px;background:#D8D5CD"></div>
<div class="a" style="left:158px;top:616px;width:770px;height:1px;background:#D8D5CD"></div>
<div class="a" style="left:158px;top:632px;width:770px;height:1px;background:#D8D5CD"></div>
<div class="a" style="left:158px;top:648px;width:770px;height:1px;background:#D8D5CD"></div>
<div class="a" style="left:158px;top:664px;width:770px;height:1px;background:#D8D5CD"></div>
<div class="a" style="left:158px;top:680px;width:770px;height:1px;background:#D8D5CD"></div>
<div class="a" style="left:158px;top:696px;width:770px;height:1px;background:#D8D5CD"></div>
<div class="a" style="left:466px;top:584px;width:1px;height:120px;background:#D8D5CD"></div>
<div class="a" style="left:927px;top:584px;width:1px;height:120px;background:#D8D5CD"></div>

<!-- ===== STATUS BAR ===== -->
<div class="a" style="left:8px;top:711px;width:3px;height:18px;box-sizing:border-box;background:#fff;border-right:1px solid #8C8880;border-bottom:1px solid #8C8880"></div>
<svg style="left:20px;top:713px" width="16" height="14" viewBox="0 0 16 14">
 <defs><linearGradient id="gFv" x1="0" y1="0" x2="0" y2="1"><stop offset="0" stop-color="#fff"/><stop offset="1" stop-color="#D0E8FC"/></linearGradient></defs>
 <rect x="0.5" y="2.500" width="5" height="11" fill="url(#gFv)" stroke="#B8A878" stroke-width="1"/>
 <rect x="0" y="2" width="6" height="2.500" fill="#4080D0"/>
 <path d="M10.500 0 L11.500 2.500 L14 3.500 L11.500 4.500 L10.500 7 L9.500 4.500 L7 3.500 L9.500 2.500 Z" fill="#FFF6B0" stroke="#B89018" stroke-width="0.9"/>
</svg>
<div class="a" style="left:687px;top:711px;width:3px;height:18px;box-sizing:border-box;background:#fff;border-right:1px solid #8C8880;border-bottom:1px solid #8C8880"></div>
<!-- PANELS-END -->

<!-- MENU-START -->
<!-- ===== DIAGRAM ===== -->
<svg style="left:158px;top:98px" width="474" height="420" viewBox="158 98 474 420">
 <defs>
  <g id="gear">
   <g fill="#B4BCD4" stroke="#505870" stroke-width="0.9">
    <circle cx="0" cy="-7.700" r="1.350"/><circle cx="0" cy="7.700" r="1.350"/><circle cx="-7.700" cy="0" r="1.350"/><circle cx="7.700" cy="0" r="1.350"/>
    <circle cx="-5.450" cy="-5.450" r="1.350"/><circle cx="5.450" cy="-5.450" r="1.350"/><circle cx="-5.450" cy="5.450" r="1.350"/><circle cx="5.450" cy="5.450" r="1.350"/>
    <circle cx="0" cy="0" r="6.900"/>
   </g>
   <circle cx="0" cy="0" r="6.450" fill="#B4BCD4"/>
   <circle cx="-1" cy="-1" r="4.600" fill="#C8D0E4" opacity="0.7"/>
   <circle cx="0" cy="0" r="2.200" fill="#fff" stroke="#505870" stroke-width="1"/>
  </g>
 </defs>
 <use href="#gear" x="212.300" y="126.500"/>
 <use href="#gear" x="184.500" y="201.500"/>
 <use href="#gear" x="240.500" y="201.500"/>
 <g stroke="#000" stroke-width="1" fill="#000">
  <path d="M214.500 136 L200 156" fill="none"/><path d="M199.500 157 L202 149.500 L206.500 153 Z"/>
  <path d="M221 136 L225 156" fill="none"/><path d="M225.500 157.500 L221.500 150.500 L227.500 149.500 Z"/>
  <path d="M193.500 172 L193.500 190" fill="none"/><path d="M193.500 192 L190.500 184.500 L196.500 184.500 Z"/>
  <path d="M231 171 L242.500 191" fill="none"/><path d="M243.500 192.500 L237 187 L242.500 184 Z"/>
 </g>
 <rect x="186.500" y="157.500" width="13" height="14" fill="#FFFFCC" stroke="#000"/>
 <rect x="220.500" y="157.500" width="13" height="14" fill="#FFFFCC" stroke="#000"/>
 <text x="187.500" y="168.800" font-size="11">a1</text>
 <text x="221.500" y="168.800" font-size="11">a2</text>
 <text x="227.500" y="131" font-size="11">s1</text>
 <text x="199.500" y="206" font-size="11">s2</text>
 <text x="255.500" y="206" font-size="11">s3</text>
</svg>

<!-- ===== CONTEXT MENU ===== -->
<div class="a" id="ctx" style="left:264px;top:262px;width:279px;height:211px;box-sizing:border-box;background:#D4D0C8;border:1px solid;border-color:#D4D0C8 #404040 #404040 #D4D0C8;box-shadow:inset 1px 1px 0 #fff, inset -1px -1px 0 #808080;">
 <div class="mi dis" style="top:7px">Undo</div>
 <div class="mi dis" style="top:27px">Redo</div>
 <div class="a" style="left:3px;top:47px;width:271px;height:1px;background:#808080"></div>
 <div class="a" style="left:3px;top:48px;width:271px;height:1px;background:#fff"></div>
 <div class="mi" style="top:55px">Run As</div><svg style="left:265px;top:56px" width="4" height="7" shape-rendering="crispEdges"><polygon points="0,0 4,3.5 0,7" fill="#000"/></svg>
 <div class="mi" style="top:73px">Debug As</div><svg style="left:265px;top:74px" width="4" height="7" shape-rendering="crispEdges"><polygon points="0,0 4,3.5 0,7" fill="#000"/></svg>
 <div class="mi" style="top:91px">Profile As</div><svg style="left:265px;top:92px" width="4" height="7" shape-rendering="crispEdges"><polygon points="0,0 4,3.5 0,7" fill="#000"/></svg>
 <div class="mi" style="top:109px">Validate</div>
 <div class="mi" style="top:127px">Team</div><svg style="left:265px;top:128px" width="4" height="7" shape-rendering="crispEdges"><polygon points="0,0 4,3.5 0,7" fill="#000"/></svg>
 <div class="mi" style="top:145px">Compare With</div><svg style="left:265px;top:146px" width="4" height="7" shape-rendering="crispEdges"><polygon points="0,0 4,3.5 0,7" fill="#000"/></svg>
 <div class="mi" style="top:163px">Replace With</div><svg style="left:265px;top:164px" width="4" height="7" shape-rendering="crispEdges"><polygon points="0,0 4,3.5 0,7" fill="#000"/></svg>
 <div class="a" style="left:3px;top:181px;width:271px;height:1px;background:#808080"></div>
 <div class="a" style="left:3px;top:182px;width:271px;height:1px;background:#fff"></div>
 <div class="mi dis" style="top:191px;letter-spacing:-0.1px">Remove from Context</div>
 <div class="mi dis" style="top:191px;left:153px;letter-spacing:-0.15px">Ctrl+Alt+Shift+Down</div>
</div>
<!-- red annotation ellipse -->
<svg style="left:245px;top:245px" width="140" height="80"><ellipse cx="67.500" cy="38.200" rx="61" ry="31" fill="none" stroke="#FF0000" stroke-width="1"/></svg>
<!-- MENU-END -->
</body>
</html>
